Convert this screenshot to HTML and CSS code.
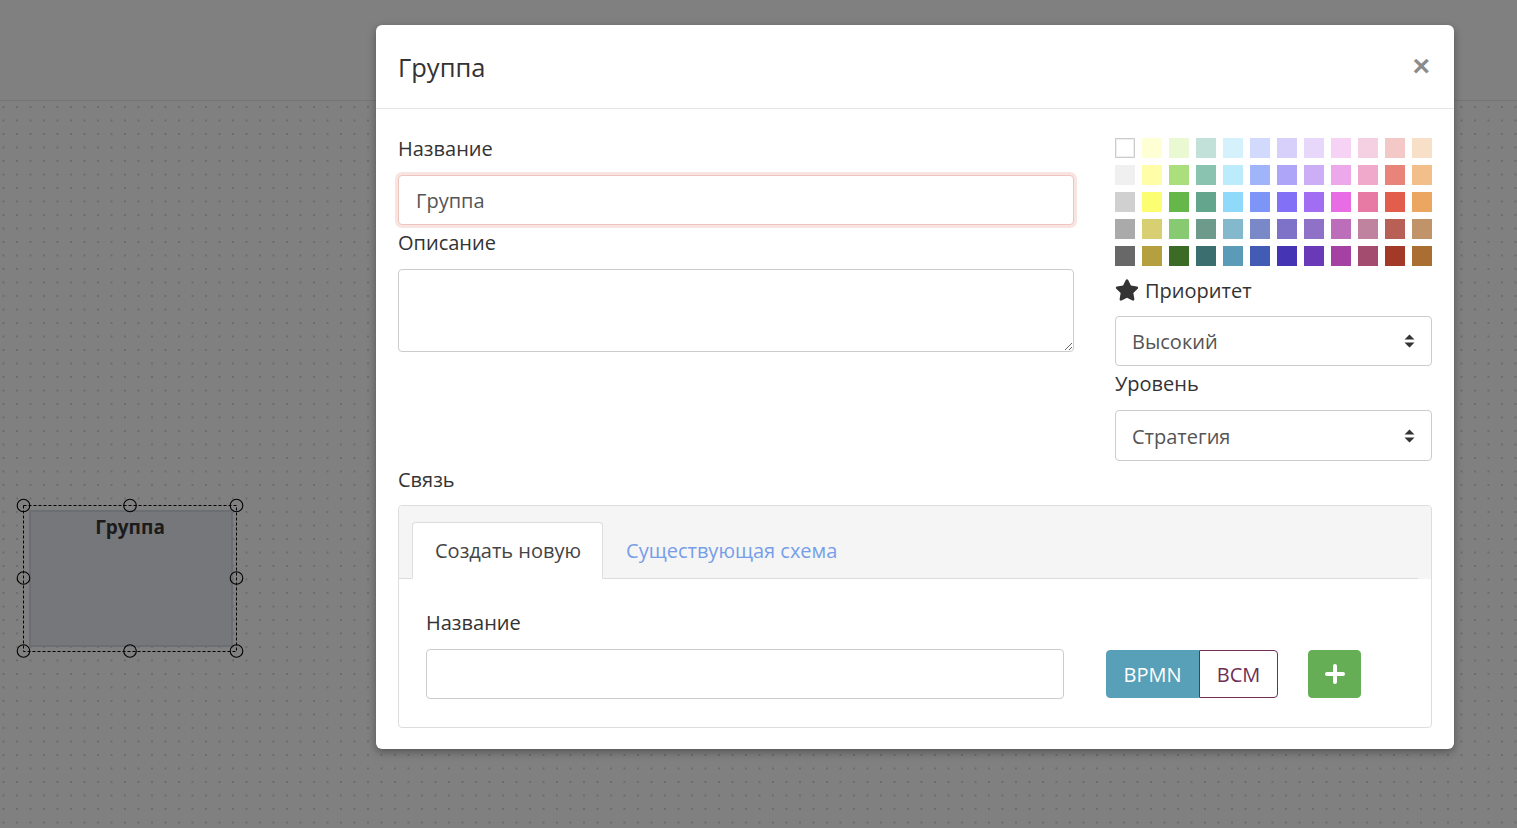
FILE: index.html
```html
<!DOCTYPE html>
<html lang="ru">
<head>
<meta charset="utf-8">
<title>Группа</title>
<link rel="stylesheet" href="styles.css">
</head>
<body>
<div class="app">
  <div class="toolbar"></div>
  <div class="canvas">
    <svg class="node" width="240" height="165" viewBox="0 0 240 165">
      <rect x="20" y="13" width="202" height="135" fill="#76777a" stroke="#6b6e72" stroke-width="2"/>
      <text x="120" y="36" text-anchor="middle" class="node-text">Группа</text>
      <rect x="13.5" y="7.5" width="213" height="146" fill="none" stroke="#000" stroke-width="1" stroke-dasharray="3 2"/>
      <g fill="none" stroke="#000" stroke-width="1.1">
        <circle cx="13.5" cy="7.5" r="6.3"/>
        <circle cx="120" cy="7.5" r="6.3"/>
        <circle cx="226.5" cy="7.5" r="6.3"/>
        <circle cx="13.5" cy="80" r="6.3"/>
        <circle cx="226.5" cy="80" r="6.3"/>
        <circle cx="13.5" cy="153" r="6.3"/>
        <circle cx="120" cy="153" r="6.3"/>
        <circle cx="226.5" cy="153" r="6.3"/>
      </g>
    </svg>
  </div>
</div>

<div class="modal">
  <div class="modal-header">
    <h4 class="modal-title">Группа</h4>
    <button class="close" type="button">×</button>
  </div>
  <div class="modal-body">
    <div class="top-row">
      <div class="col-left">
        <label class="lbl">Название</label>
        <input class="form-control focused" type="text" value="Группа">
        <label class="lbl lbl-after">Описание</label>
        <textarea class="form-control ta"></textarea>
      </div>
      <div class="col-right">
        <div class="palette">
          <span class="sw sw-white"></span>
          <span class="sw" style="background:#ffffd5"></span>
          <span class="sw" style="background:#ebf9d2"></span>
          <span class="sw" style="background:#c2e1d9"></span>
          <span class="sw" style="background:#d4f1fc"></span>
          <span class="sw" style="background:#d1dafc"></span>
          <span class="sw" style="background:#d6d0fb"></span>
          <span class="sw" style="background:#e6d7fb"></span>
          <span class="sw" style="background:#f6d3f5"></span>
          <span class="sw" style="background:#f5d0e2"></span>
          <span class="sw" style="background:#f3c8c6"></span>
          <span class="sw" style="background:#f8dfc8"></span>

          <span class="sw" style="background:#f0f0f0"></span>
          <span class="sw" style="background:#fffda8"></span>
          <span class="sw" style="background:#abdf7e"></span>
          <span class="sw" style="background:#8ac3af"></span>
          <span class="sw" style="background:#bcebfb"></span>
          <span class="sw" style="background:#a0b4fa"></span>
          <span class="sw" style="background:#afa5f8"></span>
          <span class="sw" style="background:#cbaef6"></span>
          <span class="sw" style="background:#eda8ec"></span>
          <span class="sw" style="background:#f0a9ca"></span>
          <span class="sw" style="background:#e8847a"></span>
          <span class="sw" style="background:#f2bf8b"></span>

          <span class="sw" style="background:#d0d0d0"></span>
          <span class="sw" style="background:#fdfd72"></span>
          <span class="sw" style="background:#66b74a"></span>
          <span class="sw" style="background:#63a68d"></span>
          <span class="sw" style="background:#8fdafb"></span>
          <span class="sw" style="background:#7d95f6"></span>
          <span class="sw" style="background:#8270f6"></span>
          <span class="sw" style="background:#a16ef3"></span>
          <span class="sw" style="background:#e86de4"></span>
          <span class="sw" style="background:#e77aa5"></span>
          <span class="sw" style="background:#e35d4d"></span>
          <span class="sw" style="background:#eba662"></span>

          <span class="sw" style="background:#aaaaaa"></span>
          <span class="sw" style="background:#d8cf72"></span>
          <span class="sw" style="background:#88ca72"></span>
          <span class="sw" style="background:#6e9a8b"></span>
          <span class="sw" style="background:#83b8cd"></span>
          <span class="sw" style="background:#7989c8"></span>
          <span class="sw" style="background:#7d72c7"></span>
          <span class="sw" style="background:#9071c8"></span>
          <span class="sw" style="background:#bd6eba"></span>
          <span class="sw" style="background:#c0839f"></span>
          <span class="sw" style="background:#b85f56"></span>
          <span class="sw" style="background:#c09468"></span>

          <span class="sw" style="background:#686868"></span>
          <span class="sw" style="background:#b4a03e"></span>
          <span class="sw" style="background:#3b6b25"></span>
          <span class="sw" style="background:#3b6e6e"></span>
          <span class="sw" style="background:#5c9bb8"></span>
          <span class="sw" style="background:#425bb5"></span>
          <span class="sw" style="background:#4535b5"></span>
          <span class="sw" style="background:#6a39b7"></span>
          <span class="sw" style="background:#a641a4"></span>
          <span class="sw" style="background:#a44b70"></span>
          <span class="sw" style="background:#a33a27"></span>
          <span class="sw" style="background:#aa6e33"></span>
        </div>

        <label class="lbl lbl-star">
          <svg class="star" width="24" height="22" viewBox="0 0 576 512"><path fill="#333" d="M259.3 17.8L194 150.2 47.9 171.5c-26.2 3.8-36.7 36.1-17.7 54.6l105.7 103-25 145.5c-4.5 26.3 23.2 46 46.4 33.7L288 439.6l130.7 68.7c23.2 12.2 50.9-7.4 46.4-33.7l-25-145.5 105.7-103c19-18.5 8.5-50.8-17.7-54.6L382 150.2 316.7 17.8c-11.7-23.6-45.6-23.9-57.4 0z"/></svg>
          <span>Приоритет</span>
        </label>
        <div class="select">
          <span>Высокий</span>
          <svg class="caret" width="11" height="14" viewBox="0 0 11 14"><path d="M5.5 0.5L10.5 5.5H0.5Z M5.5 13.5L10.5 8.5H0.5Z" fill="#333"/></svg>
        </div>
        <label class="lbl lbl-after">Уровень</label>
        <div class="select select-tall">
          <span>Стратегия</span>
          <svg class="caret" width="11" height="14" viewBox="0 0 11 14"><path d="M5.5 0.5L10.5 5.5H0.5Z M5.5 13.5L10.5 8.5H0.5Z" fill="#333"/></svg>
        </div>
      </div>
    </div>

    <label class="lbl lbl-link">Связь</label>
    <div class="panel">
      <div class="panel-heading">
        <ul class="nav-tabs">
          <li class="tab active">Создать новую</li>
          <li class="tab"><a class="tab-link" href="#">Существующая схема</a></li>
        </ul>
      </div>
      <div class="panel-body">
        <label class="lbl">Название</label>
        <div class="create-row">
          <input class="form-control name-input" type="text">
          <div class="btn-group">
            <button class="btn bpmn" type="button">BPMN</button>
            <button class="btn bcm" type="button">BCM</button>
          </div>
          <button class="btn add" type="button">
            <svg width="20" height="20" viewBox="0 0 20 20"><path d="M10 2V18M2 10H18" stroke="#fff" stroke-width="4" stroke-linecap="round"/></svg>
          </button>
        </div>
      </div>
    </div>
  </div>
</div>
</body>
</html>
```

FILE: styles.css
```css
* { box-sizing: border-box; }

html, body {
  margin: 0;
  padding: 0;
  width: 1517px;
  height: 828px;
  overflow: hidden;
  background: #808080;
  font-family: "Open Sans", "Noto Sans", sans-serif;
  font-size: 20px;
  line-height: 28px;
  color: #333;
}

.app {
  display: flex;
  flex-direction: column;
  height: 828px;
}

.toolbar {
  height: 101px;
  flex: none;
  background: #808080;
  border-bottom: 1px solid #767676;
}

.canvas {
  position: relative;
  flex: 1;
  background-color: #808080;
  background-image: radial-gradient(circle at 1px 1px, #6c6c6c 0.9px, transparent 1.4px);
  background-size: 13.5px 13.5px;
  background-position: 2.5px 5px;
}

.node {
  position: absolute;
  left: 10px;
  top: 397px;
}

.node-text {
  font-family: "Open Sans", sans-serif;
  font-weight: 700;
  font-size: 19px;
  fill: #1b1b1b;
}

/* modal */
.modal {
  position: absolute;
  left: 376px;
  top: 25px;
  width: 1078px;
  height: 724px;
  background: #fff;
  border-radius: 6px;
  box-shadow: 0 3px 9px rgba(0, 0, 0, 0.35);
}

.modal-header {
  height: 84px;
  padding: 0 22px;
  display: flex;
  align-items: center;
  justify-content: space-between;
  border-bottom: 1px solid #e5e5e5;
}

.modal-title {
  margin: 0;
  font-family: "Open Sans", "Noto Sans", sans-serif;
  font-weight: 400;
  font-size: 25.5px;
  line-height: 30px;
  color: #333;
  padding-top: 0;
}

.close {
  border: 0;
  background: transparent;
  padding: 0;
  margin-top: -2px;
  margin-right: 2px;
  font-family: "Liberation Sans", Arial, sans-serif;
  font-size: 30px;
  font-weight: 700;
  line-height: 1;
  color: #000;
  opacity: 0.45;
}

.modal-body {
  padding: 26px 22px 0;
}

.top-row {
  display: grid;
  grid-template-columns: 676px 317px;
  column-gap: 41px;
}

.col-left, .col-right {
  display: flex;
  flex-direction: column;
}

.lbl {
  display: block;
  margin-bottom: 12px;
  font-weight: 400;
  color: #333;
}

.lbl-after { margin-top: 4px; }
.lbl-link { margin-top: 5px; margin-bottom: 11px; }

.form-control {
  display: block;
  width: 100%;
  height: 50px;
  padding: 0 17px;
  border: 1px solid #ccc;
  border-radius: 4px;
  background: #fff;
  font-family: inherit;
  font-size: 20px;
  color: #555;
  outline: none;
}

.focused {
  border-color: #efc4bc;
  box-shadow: 0 0 0 3px rgba(236, 180, 170, 0.35);
}

.ta {
  height: 83px;
  resize: vertical;
  padding: 8px 17px;
}

.palette {
  display: grid;
  grid-template-columns: repeat(12, 20px);
  grid-auto-rows: 20px;
  gap: 7px;
  margin-top: 3px;
  margin-bottom: 8px;
}

.sw { display: block; }

.sw-white {
  background: #fff;
  border: 1px solid #ccc;
  box-shadow: inset 0 0 0 1px #eee;
}

.lbl-star {
  display: flex;
  align-items: center;
  gap: 6px;
  margin-top: 3px;
  margin-bottom: 11px;
}

.star { flex: none; margin-top: -2px; }

.select {
  display: flex;
  align-items: center;
  justify-content: space-between;
  height: 50px;
  padding: 2px 16px 0 16px;
  border: 1px solid #ccc;
  border-radius: 4px;
  color: #555;
}

.select-tall { height: 51px; }

.caret { flex: none; margin-top: -2px; }

/* panel */
.panel {
  border: 1px solid #ddd;
  border-radius: 4px;
  height: 223px;
}

.panel-heading {
  background: #f5f5f5;
  padding-top: 16px;
  border-radius: 4px 4px 0 0;
}

.nav-tabs {
  display: flex;
  list-style: none;
  margin: 0 13px 0 0;
  padding: 0;
  border-bottom: 1px solid #ddd;
}

.tab {
  height: 57px;
  margin-bottom: -1px;
  line-height: 57px;
}

.tab.active {
  margin-left: 13px;
  padding: 0 21px 0 22px;
  background: #fff;
  border: 1px solid #ddd;
  border-bottom-color: transparent;
  border-radius: 4px 4px 0 0;
  color: #444;
  line-height: 56px;
}

.tab-link {
  display: block;
  padding: 0 23px;
  color: #779ee8;
  text-decoration: none;
}

.panel-body {
  padding: 30px 27px 0;
}

.create-row {
  display: flex;
  align-items: center;
}

.name-input {
  width: 638px;
  flex: none;
}

.btn-group {
  display: flex;
  margin-left: 42px;
}

.btn {
  height: 48px;
  border: 1px solid transparent;
  font-family: inherit;
  font-size: 20px;
  line-height: 1;
  padding: 2px 0 0;
  cursor: pointer;
}

.bpmn {
  width: 93px;
  background: #589fb8;
  border-color: #589fb8;
  color: #fff;
  border-radius: 4px 0 0 4px;
}

.bcm {
  width: 79px;
  background: #fff;
  border-color: #6f2f55;
  color: #6f2f55;
  border-radius: 0 4px 4px 0;
}

.add {
  width: 53px;
  margin-left: 30px;
  padding: 0;
  background: #66ae55;
  border-color: #66ae55;
  border-radius: 4px;
  display: flex;
  align-items: center;
  justify-content: center;
}
```
